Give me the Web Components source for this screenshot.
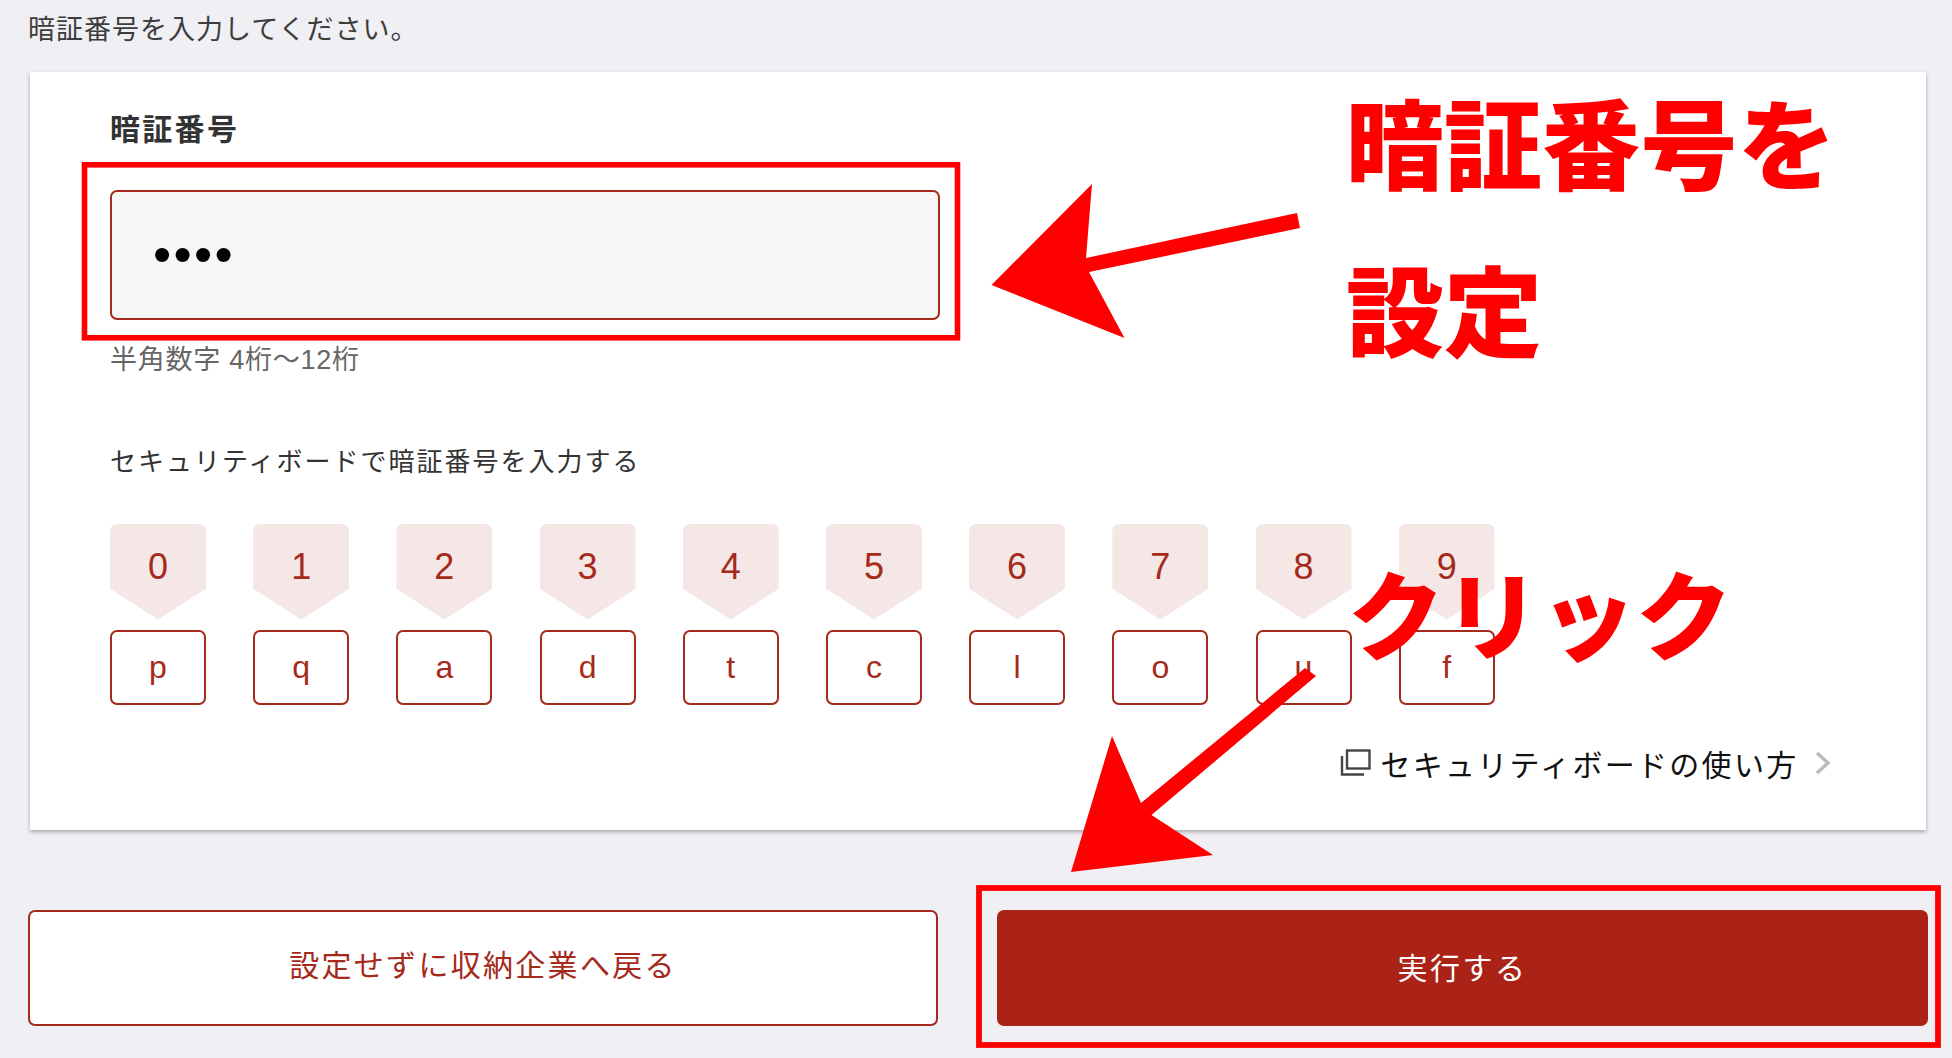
<!DOCTYPE html>
<html lang="ja">
<head>
<meta charset="utf-8">
<title>暗証番号</title>
<style>
  html, body { margin: 0; background: #efeff4; }
  body { font-family: "Liberation Sans", "Noto Sans CJK JP", sans-serif; color: #333; }
</style>
</head>
<body>
<pin-page>
  <intro-text>暗証番号を入力してください。</intro-text>
  <pin-card>
    <pin-field label="暗証番号" hint="半角数字 4桁～12桁"></pin-field>
    <security-board keys="pqadtclouf"></security-board>
  </pin-card>
  <action-row>
    <action-button>設定せずに収納企業へ戻る</action-button>
    <action-button primary>実行する</action-button>
  </action-row>
  <annotation-layer></annotation-layer>
</pin-page>

<script>
const JP = '"Liberation Sans", "Noto Sans CJK JP", sans-serif';

class PinPage extends HTMLElement {
  constructor() {
    super();
    this.attachShadow({ mode: 'open' }).innerHTML = `
      <style>
        :host { display: block; position: relative; width: 1952px; height: 1058px; overflow: hidden; background: #efeff4; }
      </style>
      <slot></slot>`;
  }
}

class IntroText extends HTMLElement {
  constructor() {
    super();
    this.attachShadow({ mode: 'open' }).innerHTML = `
      <style>
        :host { display: block; height: 61px; line-height: 61px; padding: 0 0 11px 28px; font-size: 27px; letter-spacing: 1px; color: #3c3c3c; }
      </style>
      <slot></slot>`;
  }
}

class PinCard extends HTMLElement {
  constructor() {
    super();
    this.attachShadow({ mode: 'open' }).innerHTML = `
      <style>
        :host { display: block; box-sizing: border-box; width: 1896px; height: 758px; margin-left: 30px; padding: 35px 95px 0 80px; background: #fff; box-shadow: 0 2px 4px rgba(0,0,0,.3); }
      </style>
      <slot></slot>`;
  }
}

class PinField extends HTMLElement {
  constructor() {
    super();
    const label = this.getAttribute('label');
    const hint = this.getAttribute('hint');
    this.attachShadow({ mode: 'open' }).innerHTML = `
      <style>
        :host { display: block; }
        .label { height: 46px; line-height: 46px; font-size: 30px; font-weight: 700; letter-spacing: 2.3px; color: #333; }
        input {
          display: block; box-sizing: border-box; width: 830px; height: 130px; margin: 37px 0 0;
          padding: 0 0 2px 41px; border: 2px solid #a52a1c; border-radius: 7px; background: #f6f6f6;
          font-family: "Liberation Sans", sans-serif; font-size: 52px; letter-spacing: 2.3px; color: #000; outline: none;
        }
        .hint { height: 36px; line-height: 36px; margin-top: 22px; font-size: 27px; letter-spacing: .75px; color: #666; }
      </style>
      <div class="label">${label}</div>
      <input type="password" value="1234" aria-label="${label}">
      <div class="hint">${hint}</div>`;
  }
}

class BoardKey extends HTMLElement {
  constructor() {
    super();
    const digit = this.getAttribute('digit');
    const letter = this.getAttribute('letter');
    this.attachShadow({ mode: 'open' }).innerHTML = `
      <style>
        :host { display: block; width: 96px; color: #a52a1c; font-size: 36px; text-align: center; }
        .digit {
          height: 96px; line-height: 86px; background: #f4e7e6; border-radius: 7px 7px 0 0;
          clip-path: polygon(0 0, 100% 0, 100% 68%, 50% 100%, 0 68%);
        }
        .letter {
          box-sizing: border-box; height: 75px; line-height: 71px; margin-top: 10px;
          border: 2px solid #a52a1c; border-radius: 7px; background: #fff; font-size: 32px;
        }
      </style>
      <div class="digit">${digit}</div>
      <div class="letter">${letter}</div>`;
  }
}

class SecurityBoard extends HTMLElement {
  constructor() {
    super();
    const keys = [...this.getAttribute('keys')];
    this.attachShadow({ mode: 'open' }).innerHTML = `
      <style>
        :host { display: block; }
        .title { height: 40px; line-height: 40px; margin-top: 63.5px; font-size: 26px; letter-spacing: 2px; color: #333; }
        .keys { display: flex; gap: 47.2px; margin-top: 42px; }
        .help { display: flex; justify-content: flex-end; align-items: center; gap: 9px; height: 40px; margin-top: 38.5px; font-size: 30px; letter-spacing: 2.3px; color: #111; }
        .help svg { display: block; }
      </style>
      <div class="title">セキュリティボードで暗証番号を入力する</div>
      <div class="keys">
        ${keys.map((k, i) => `<board-key digit="${i}" letter="${k}"></board-key>`).join('')}
      </div>
      <div class="help">
        <svg width="32" height="28" viewBox="0 0 32 28" fill="none" stroke="#444" stroke-width="2.4">
          <rect x="8" y="1.5" width="22.5" height="18"/>
          <path d="M3 7V25.5H25"/>
        </svg>
        <span>セキュリティボードの使い方</span>
        <svg width="16" height="24" viewBox="0 0 16 24" fill="none" stroke="#bbb" stroke-width="3.4" style="margin-left:7.5px">
          <path d="M2 2L13 12L2 22"/>
        </svg>
      </div>`;
  }
}

class ActionRow extends HTMLElement {
  constructor() {
    super();
    this.attachShadow({ mode: 'open' }).innerHTML = `
      <style>
        :host { display: grid; grid-template-columns: 910px 931px; column-gap: 59px; margin: 80px 0 0 28px; }
      </style>
      <slot></slot>`;
  }
}

class ActionButton extends HTMLElement {
  constructor() {
    super();
    this.attachShadow({ mode: 'open' }).innerHTML = `
      <style>
        :host { display: flex; box-sizing: border-box; height: 116px; padding-bottom: 10px; align-items: center; justify-content: center; border: 2px solid #a52a1c; border-radius: 7px; background: #fff; color: #a52a1c; font-size: 30px; letter-spacing: 2.3px; }
        :host([primary]) { padding-bottom: 5px; letter-spacing: 2.5px; background: #ab2316; border-color: #ab2316; color: #fff; }
      </style>
      <slot></slot>`;
  }
}

class AnnotationLayer extends HTMLElement {
  constructor() {
    super();
    this.attachShadow({ mode: 'open' }).innerHTML = `
      <style>
        :host { position: absolute; inset: 0; display: block; pointer-events: none; font-family: ${JP}; }
        svg { position: absolute; left: 0; top: 0; }
        .note { position: absolute; color: #f00; font-size: 98px; font-weight: 900; line-height: 167px; white-space: nowrap; }
      </style>
      <svg width="1952" height="1058" viewBox="0 0 1952 1058">
        <rect x="84.5" y="164.8" width="873" height="173" fill="none" stroke="#f00" stroke-width="5.6"/>
        <rect x="979" y="888" width="959" height="157" fill="none" stroke="#f00" stroke-width="5.8"/>
        <polygon fill="#f00" points="991.5,285 1092,184 1086,258 1297,213 1300,228 1089,272 1124.5,338"/>
        <polygon fill="#f00" points="1071,872 1112,736 1141,803 1305,668 1316,676 1151.5,815 1213,855"/>
      </svg>
      <div class="note" style="left:1346px;top:65px">暗証番号を<br>設定</div>
      <div class="note" style="left:1348px;top:535px;font-size:96px">クリック</div>`;
  }
}

customElements.define('pin-page', PinPage);
customElements.define('intro-text', IntroText);
customElements.define('pin-card', PinCard);
customElements.define('pin-field', PinField);
customElements.define('board-key', BoardKey);
customElements.define('security-board', SecurityBoard);
customElements.define('action-row', ActionRow);
customElements.define('action-button', ActionButton);
customElements.define('annotation-layer', AnnotationLayer);
</script>
</body>
</html>
